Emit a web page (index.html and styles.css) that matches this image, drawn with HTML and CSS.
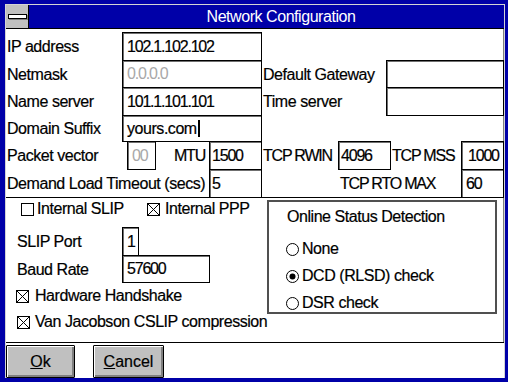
FILE: index.html
```html
<!DOCTYPE html>
<html lang="en">

<head>
    <meta charset="UTF-8">
    <meta name="viewport" content="width=device-width, initial-scale=1.0">
    <title>Network Configuration</title>
    <link rel="stylesheet" href="styles.css">
</head>

<body>
    <div class="window">
        <div class="frame">
            <div class="titlebar">
                <div class="sysmenu"><span class="sysmenu-bar"></span></div>
                <div class="title">Network Configuration</div>
            </div>

            <div class="panel">
                <div class="top-grid">
                    <div class="lbl col-label">IP address</div>
                    <div class="field num col-addr">102.1.102.102</div>

                    <div class="lbl col-label">Netmask</div>
                    <div class="field num disabled col-addr">0.0.0.0</div>
                    <div class="lbl col-label2">Default Gateway</div>
                    <div class="field col-addr2"></div>

                    <div class="lbl col-label">Name server</div>
                    <div class="field num col-addr">101.1.101.101</div>
                    <div class="lbl col-label2">Time server</div>
                    <div class="field col-addr2"></div>

                    <div class="lbl col-label">Domain Suffix</div>
                    <div class="field col-addr">yours.com<span class="caret"></span></div>

                    <div class="lbl col-packet-label">Packet vector</div>
                    <div class="field num disabled col-packet">00</div>
                    <div class="lbl lbl-right caps col-mtu-label">MTU</div>
                    <div class="field num tight col-mtu">1500</div>
                    <div class="lbl caps col-rwin-label">TCP RWIN</div>
                    <div class="field num tight col-rwin">4096</div>
                    <div class="lbl caps col-mss-label">TCP MSS</div>
                    <div class="field num wide-pad col-mss">1000</div>

                    <div class="lbl col-demand-label">Demand Load Timeout (secs)</div>
                    <div class="field num tight col-mtu">5</div>
                    <div class="lbl lbl-rto caps col-rto-label">TCP RTO MAX</div>
                    <div class="field num col-mss">60</div>
                </div>

                <div class="lower">
                    <div class="lower-left">
                        <div class="check-row">
                            <span class="check check-slip">
                                <svg class="box" viewBox="0 0 13 13"><rect x="0.5" y="0.5" width="12" height="12" fill="#fff" stroke="#000"/></svg>
                                Internal SLIP
                            </span>
                            <span class="check">
                                <svg class="box" viewBox="0 0 13 13"><rect x="0.5" y="0.5" width="12" height="12" fill="#fff" stroke="#000"/><path d="M1 1L12 12M12 1L1 12" stroke="#000"/></svg>
                                Internal PPP
                            </span>
                        </div>

                        <div class="port-grid">
                            <div class="sub-lbl">SLIP Port</div>
                            <div class="field num port-field">1</div>
                            <div class="sub-lbl">Baud Rate</div>
                            <div class="field num baud-field">57600</div>
                        </div>

                        <div class="check check-line check-hw">
                            <svg class="box" viewBox="0 0 13 13"><rect x="0.5" y="0.5" width="12" height="12" fill="#fff" stroke="#000"/><path d="M1 1L12 12M12 1L1 12" stroke="#000"/></svg>
                            Hardware Handshake
                        </div>
                        <div class="check check-line check-vj">
                            <svg class="box" viewBox="0 0 13 13"><rect x="0.5" y="0.5" width="12" height="12" fill="#fff" stroke="#000"/><path d="M1 1L12 12M12 1L1 12" stroke="#000"/></svg>
                            Van Jacobson CSLIP compression
                        </div>
                    </div>

                    <div class="group">
                        <div class="group-title">Online Status Detection</div>
                        <div class="option">
                            <svg class="radio" viewBox="0 0 13 13"><circle cx="6.5" cy="6.5" r="6" fill="#fff" stroke="#000"/></svg>
                            None
                        </div>
                        <div class="option">
                            <svg class="radio" viewBox="0 0 13 13"><circle cx="6.5" cy="6.5" r="6" fill="#fff" stroke="#000"/><circle cx="6.5" cy="6.5" r="3" fill="#000"/></svg>
                            DCD (RLSD) check
                        </div>
                        <div class="option">
                            <svg class="radio" viewBox="0 0 13 13"><circle cx="6.5" cy="6.5" r="6" fill="#fff" stroke="#000"/></svg>
                            DSR check
                        </div>
                    </div>
                </div>
            </div>

            <div class="buttons">
                <button class="btn btn-ok"><u>O</u>k</button>
                <button class="btn btn-cancel"><u>C</u>ancel</button>
            </div>
        </div>
    </div>
</body>

</html>
```

FILE: styles.css
```css
body {
    margin: 0;
    font-family: "Liberation Sans", Arial, sans-serif;
    font-size: 16px;
    letter-spacing: -0.45px;
    line-height: 18px;
    color: #000;
    background: #0000a8;
    -webkit-text-stroke: 0.2px;
}

.window {
    width: 508px;
    height: 382px;
    box-sizing: border-box;
    padding: 4px 3px 4px 5px;
    background: #0000a8;
}

.frame {
    height: 100%;
    box-sizing: border-box;
    border: 1px solid #d4d4d4;
    border-bottom: none;
    background: #fff;
    display: flex;
    flex-direction: column;
}

/* title bar */

.titlebar {
    display: flex;
    height: 23px;
    flex-shrink: 0;
    border-bottom: 1px solid #000;
    background: #0000a8;
    color: #fff;
}

.sysmenu {
    width: 22px;
    border-right: 1px solid #000;
    background: #c0c0c0;
    display: flex;
    align-items: center;
    justify-content: center;
}

.sysmenu-bar {
    width: 17px;
    height: 3px;
    border: 1px solid #000;
    background: #fff;
    box-shadow: 1px 1px 0 #808080;
}

.title {
    flex: 1;
    text-align: center;
    line-height: 23px;
    padding-left: 29px;
    -webkit-text-stroke: 0;
}

/* upper panel */

.panel {
    padding-top: 3px;
    border-bottom: 1px solid #000;
    box-shadow: inset -1px 0 0 #808080;
}

.top-grid {
    display: grid;
    grid-template-columns: 116px 5px 29px 53px 53px 76px 48px 5px 70px 43px;
    grid-template-rows: 28px 27px 28px 26px 28px 28px;
}

.lbl {
    display: flex;
    align-items: center;
    padding: 2px 0 0 1px;
    white-space: nowrap;
}

.lbl.caps {
    letter-spacing: -1.2px;
}

.lbl-right {
    justify-content: flex-end;
    padding-right: 4px;
}

.lbl-rto {
    padding-left: 2px;
}

.col-label { grid-column: 1 / 2; }
.col-addr { grid-column: 2 / 6; }
.col-label2 { grid-column: 6 / 8; }
.col-addr2 { grid-column: 8 / 11; }
.col-packet-label { grid-column: 1 / 3; }
.col-packet { grid-column: 3 / 4; }
.col-mtu-label { grid-column: 4 / 5; }
.col-mtu { grid-column: 5 / 6; }
.col-rwin-label { grid-column: 6 / 7; }
.col-rwin { grid-column: 7 / 9; }
.col-mss-label { grid-column: 9 / 10; }
.col-mss { grid-column: 10 / 11; }
.col-demand-label { grid-column: 1 / 5; }
.col-rto-label { grid-column: 7 / 10; }

.field {
    box-sizing: border-box;
    height: calc(100% + 1px);
    border: 1px solid #000;
    box-shadow: inset 1px 1px 0 #707070;
    padding-left: 4px;
    display: flex;
    align-items: center;
    background: #fff;
    white-space: nowrap;
}

.field.tight {
    padding-left: 2px;
}

.field.wide-pad {
    padding-left: 6px;
}

.num {
    letter-spacing: -1.2px;
}

.disabled {
    color: #a8a8a8;
    -webkit-text-stroke: 0;
}

.caret {
    display: inline-block;
    width: 2px;
    height: 17px;
    margin-left: 1px;
    background: #000;
}

/* lower section */

.lower {
    display: flex;
    height: 144px;
    border-top: 1px solid #000;
}

.lower-left {
    width: 261px;
    flex-shrink: 0;
    white-space: nowrap;
}

.check {
    display: flex;
    align-items: center;
    gap: 5px;
    height: 18px;
}

.check .box {
    width: 13px;
    height: 13px;
    flex-shrink: 0;
}

.check-row {
    display: flex;
    margin-top: 2px;
    padding-left: 15px;
}

.check-row .check-slip {
    width: 126px;
    gap: 3px;
}

.port-grid {
    display: grid;
    grid-template-columns: 116px auto;
    grid-template-rows: 28px 27px;
    justify-items: start;
    margin-top: 9px;
}

.sub-lbl {
    display: flex;
    align-items: center;
    padding: 2px 0 0 11px;
}

.port-field {
    width: 17px;
}

.baud-field {
    width: 88px;
}

.check-hw {
    margin-top: 5px;
    padding-left: 10px;
    gap: 6px;
}

.check-vj {
    margin-top: 8px;
    padding-left: 11px;
}

.group {
    margin-top: 2px;
    width: 230px;
    height: 114px;
    box-sizing: border-box;
    border: 2px solid #505050;
    padding-left: 17px;
}

.group-title {
    margin-top: 6px;
    padding-left: 1px;
}

.option {
    display: flex;
    align-items: center;
    gap: 3px;
    height: 16px;
    margin-top: 11px;
}

.group-title + .option {
    margin-top: 15px;
}

.radio {
    width: 13px;
    height: 13px;
    flex-shrink: 0;
}

/* buttons */

.buttons {
    display: flex;
    gap: 18px;
    padding-top: 2px;
    height: 35px;
    box-sizing: border-box;
}

.btn {
    height: 33px;
    box-sizing: border-box;
    padding: 0;
    border: 1px solid #000;
    border-radius: 1px;
    background: #c0c0c0;
    box-shadow: inset 1px 1px 0 #fff, inset -2px -2px 0 #808080;
    font: inherit;
    color: #000;
}

.btn-ok {
    width: 69px;
}

.btn-cancel {
    width: 71px;
}
```
